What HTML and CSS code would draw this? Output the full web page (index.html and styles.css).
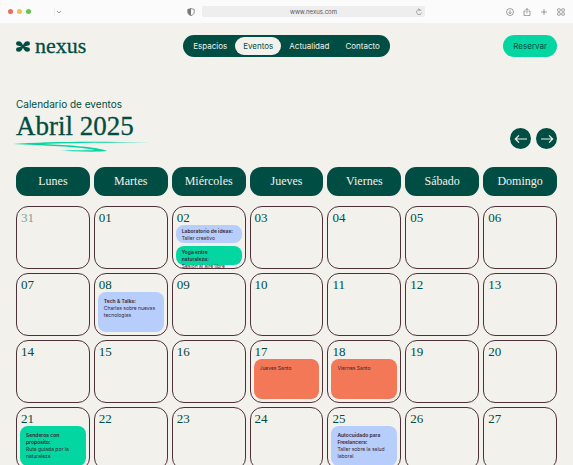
FILE: index.html
```html
<!DOCTYPE html>
<html lang="es">
<head>
<meta charset="utf-8">
<meta name="viewport" content="width=device-width, initial-scale=1">
<title>Nexus</title>
<link rel="stylesheet" href="styles.css">
</head>
<body>
<div class="browser">
  <div class="lights"><span class="light red"></span><span class="light amber"></span><span class="light green"></span></div>
  <svg class="chevron" viewBox="0 0 8 10" width="8" height="10"><path d="M.5 1v8" stroke="#eee"/><path d="M3 4l2 2 2-2" fill="none" stroke="#999"/></svg>
  <svg class="shield" viewBox="0 0 8 8" width="8" height="8"><path d="M4 .6L7.2 1.4V4C7.2 6 5.8 7 4 7.6 2.2 7 .8 6 .8 4V1.400z" fill="#fafafa" stroke="#777" stroke-width=".8"/><path d="M4 .6V7.600C2.200 7 .8 6 .8 4V1.400z" fill="#777"/></svg>
  <div class="address"><span class="url">www.nexus.com</span><svg class="reload" viewBox="0 0 8 8" width="8" height="8"><path d="M6.300 3A2.500 2.500 0 1 0 6.500 4.600M3.300.5L4.800 1.800 3.500 3.200" fill="none" stroke="#888" stroke-width=".7"/></svg></div>
  <div class="tools">
    <svg viewBox="0 0 8 8" width="8" height="8"><circle cx="4" cy="4" r="3.500"/><path d="M4 2v3.700M2.500 4.300L4 5.800 5.500 4.300"/></svg>
    <svg viewBox="0 0 8 8" width="8" height="8"><path d="M2.700 3H1v4.600h6V3H5.300M4 5.300V.6M2.500 2L4 .5 5.500 2"/></svg>
    <svg viewBox="0 0 8 8" width="8" height="8"><path d="M4 1v6M1 4h6"/></svg>
    <svg viewBox="0 0 8 8" width="8" height="8"><rect x=".6" y=".8" width="2.700" height="2.500" rx=".6"/><rect x="4.700" y=".8" width="2.700" height="2.500" rx=".6"/><rect x=".6" y="4.700" width="2.700" height="2.500" rx=".6"/><rect x="4.700" y="4.700" width="2.700" height="2.500" rx=".6"/></svg>
  </div>
</div>
<div class="page">
  <header class="site-header">
    <a class="brand" href="#">
      <svg viewBox="0 0 14 11" width="14" height="11"><g fill="#004d43"><path d="M0 2.500Q0 .2 2.500.2C5 .2 6.200 2 7 4.200 7.800 2 9 .2 11.500.2Q14 .2 14 2.500T11.500 4.800L8.300 5.500 11.500 6.200Q14 6.200 14 8.500T11.500 10.800C9 10.800 7.800 9 7 6.800 6.200 9 5 10.800 2.500 10.800Q0 10.800 0 8.500T2.500 6.200L5.700 5.500 2.500 4.800Q0 4.800 0 2.500z"/></g></svg>
      <span>nexus</span>
    </a>
    <nav class="nav">
      <a href="#">Espacios</a><a class="current" href="#">Eventos</a><a href="#">Actualidad</a><a href="#">Contacto</a>
    </nav>
    <button class="reserve" type="button">Reservar</button>
  </header>
  <main>
    <div class="heading">
      <div class="title">
        <p>Calendario de eventos</p>
        <h1>Abril 2025</h1>
        <svg class="stroke" viewBox="0 0 138 12" width="138" height="12"><path d="M0 3C30 .5 85 0 138 1.500 95 1.700 65 1.500 30 3 55 4 85 6 94 10 80 11.500 60 10 46 9.500 62 8.800 74 9.600 82 9 65 5.500 30 4.500 0 3z" fill="#03d6a0"/></svg>
      </div>
      <div class="pager">
        <button type="button" aria-label="Mes anterior"><svg viewBox="0 0 14 10" width="14" height="10"><path d="M13 5H1.500M5 1.300L1.300 5 5 8.700"/></svg></button>
        <button type="button" aria-label="Mes siguiente"><svg viewBox="0 0 14 10" width="14" height="10"><path d="M1 5h11.500M9 1.300L12.700 5 9 8.700"/></svg></button>
      </div>
    </div>
    <table class="calendar">
      <thead><tr><th>Lunes</th><th>Martes</th><th>Miércoles</th><th>Jueves</th><th>Viernes</th><th>Sábado</th><th>Domingo</th></tr></thead>
      <tbody>
        <tr>
          <td class="outside"><time>31</time></td><td><time>01</time></td>
          <td><time>02</time><div class="event short blue"><b>Laboratorio de ideas:</b><span>Taller creativo</span></div><div class="event short mint"><b>Yoga entre naturaleza:</b><span>Sesión al aire libre</span></div></td>
          <td><time>03</time></td><td><time>04</time></td><td><time>05</time></td><td><time>06</time></td>
        </tr>
        <tr>
          <td><time>07</time></td>
          <td><time>08</time><div class="event blue"><b>Tech &amp; Talks:</b><span>Charlas sobre nuevas tecnologías</span></div></td>
          <td><time>09</time></td><td><time>10</time></td><td><time>11</time></td><td><time>12</time></td><td><time>13</time></td>
        </tr>
        <tr>
          <td><time>14</time></td><td><time>15</time></td><td><time>16</time></td>
          <td><time>17</time><div class="event coral"><span>Jueves Santo</span></div></td>
          <td><time>18</time><div class="event coral"><span>Viernes Santo</span></div></td>
          <td><time>19</time></td><td><time>20</time></td>
        </tr>
        <tr>
          <td><time>21</time><div class="event mint"><b>Senderos con propósito:</b><span>Ruta guiada por la naturaleza</span></div></td>
          <td><time>22</time></td><td><time>23</time></td><td><time>24</time></td>
          <td><time>25</time><div class="event blue"><b>Autocuidado para Freelancers:</b><span>Taller sobre la salud laboral</span></div></td>
          <td><time>26</time></td><td><time>27</time></td>
        </tr>
      </tbody>
    </table>
  </main>
</div>
</body>
</html>
```
FILE: styles.css
```css
:root {
  --green: #004d43;
  --mint: #03d6a0;
  --paper: #f3f1ec;
  --line: #4d3038;
  --sans: Inter, "Liberation Sans", sans-serif;
  --serif: "Liberation Serif", serif;
}

* { box-sizing: border-box; }

body {
  display: flex;
  flex-direction: column;
  height: 100vh;
  margin: 0;
  color: var(--green);
  background: var(--paper);
  font-family: var(--sans);
}

h1, p { margin: 0; }
a { color: inherit; text-decoration: none; }
button { padding: 0; border: 0; font-family: inherit; }
svg { display: block; flex: none; }

.browser {
  display: grid;
  grid-template-columns: 1fr 40% 1fr;
  grid-template-columns: auto auto 1fr 40% 1fr;
  align-items: center;
  flex: none;
  height: 23px;
  padding: 0 8px;
  background: #fbfbfb;
}

.lights { display: flex; gap: 4px; }
.light { width: 5px; height: 5px; border-radius: 50%; }
.red { background: #ed6a5e; }
.amber { background: #f4bf4f; }
.green { background: #61c554; }
.chevron { margin-left: 23px; }
.shield { justify-self: end; margin-right: 7px; }

.address {
  position: relative;
  height: 11px;
  border-radius: 2px;
  background: #eee;
  color: #555;
  font-size: 6px;
  line-height: 11px;
  text-align: center;
}

.reload { position: absolute; top: 2px; right: 2px; }
.tools { display: flex; justify-content: flex-end; gap: 9px; }
.tools svg { fill: none; stroke: #777; stroke-width: .7; }

.page {
  flex: 1;
  min-height: 0;
  padding: 12px 16px 0;
  overflow: auto;
  scrollbar-width: none;
}

.site-header {
  display: grid;
  grid-template-columns: 1fr auto 1fr;
  align-items: center;
}

.brand {
  display: flex;
  align-items: center;
  gap: 5px;
  font: 22px/22px var(--serif);
}

.brand span { -webkit-text-stroke: .3px; }

.nav {
  display: flex;
  padding: 2px;
  border-radius: 11px;
  background: var(--green);
  color: var(--paper);
  font-size: 8px;
  line-height: 18px;
}

.nav a { padding: 0 8px; border-radius: 9px; }
.nav .current { background: var(--paper); color: var(--green); }

.reserve {
  justify-self: end;
  height: 22px;
  padding: 0 10px;
  border-radius: 11px;
  background: var(--mint);
  color: var(--green);
  font-size: 8px;
}

.heading {
  display: flex;
  align-items: flex-end;
  justify-content: space-between;
  margin-top: 41px;
}

.title p { font-size: 10px; line-height: 12px; }
.title h1 { font: 27px/32px var(--serif); -webkit-text-stroke: .3px; }
.stroke { margin: -1px 0 0 -3px; }
.pager { display: flex; gap: 5px; margin-bottom: 4px; }

.pager button {
  display: grid;
  place-items: center;
  width: 21px;
  height: 21px;
  border-radius: 50%;
  background: var(--green);
}

.pager svg { fill: none; stroke: var(--paper); stroke-width: 1.2; }

.calendar, .calendar thead, .calendar tbody { display: block; }
.calendar { margin-top: 14px; }

.calendar tr {
  display: grid;
  grid-template-columns: repeat(7, 1fr);
  gap: 4px;
  margin-bottom: 4px;
}

.calendar thead { margin-bottom: 10px; }

th {
  padding: 0;
  border-radius: 11px;
  background: var(--green);
  color: var(--paper);
  font: 12px/29px var(--serif);
}

td {
  display: flex;
  flex-direction: column;
  min-width: 0;
  height: 63px;
  padding: 4px 3px 3px;
  border: 1px solid var(--line);
  border-radius: 12px;
}

time {
  padding-left: 1px;
  font: 13px/14px var(--serif);
}

.outside time { opacity: .5; }

.event {
  display: flex;
  flex-direction: column;
  height: 41px;
  padding: 6px 6px 0;
  border-radius: 8px;
  color: #3a2430;
  font-size: 5px;
  line-height: 7px;
}

.event b { font-weight: 600; }
.short { height: 19px; padding-top: 3px; }
.short + .short { margin-top: 3px; }
.blue { background: #b7cdfb; }
.mint { background: var(--mint); }
.coral { background: #f27858; }
```
